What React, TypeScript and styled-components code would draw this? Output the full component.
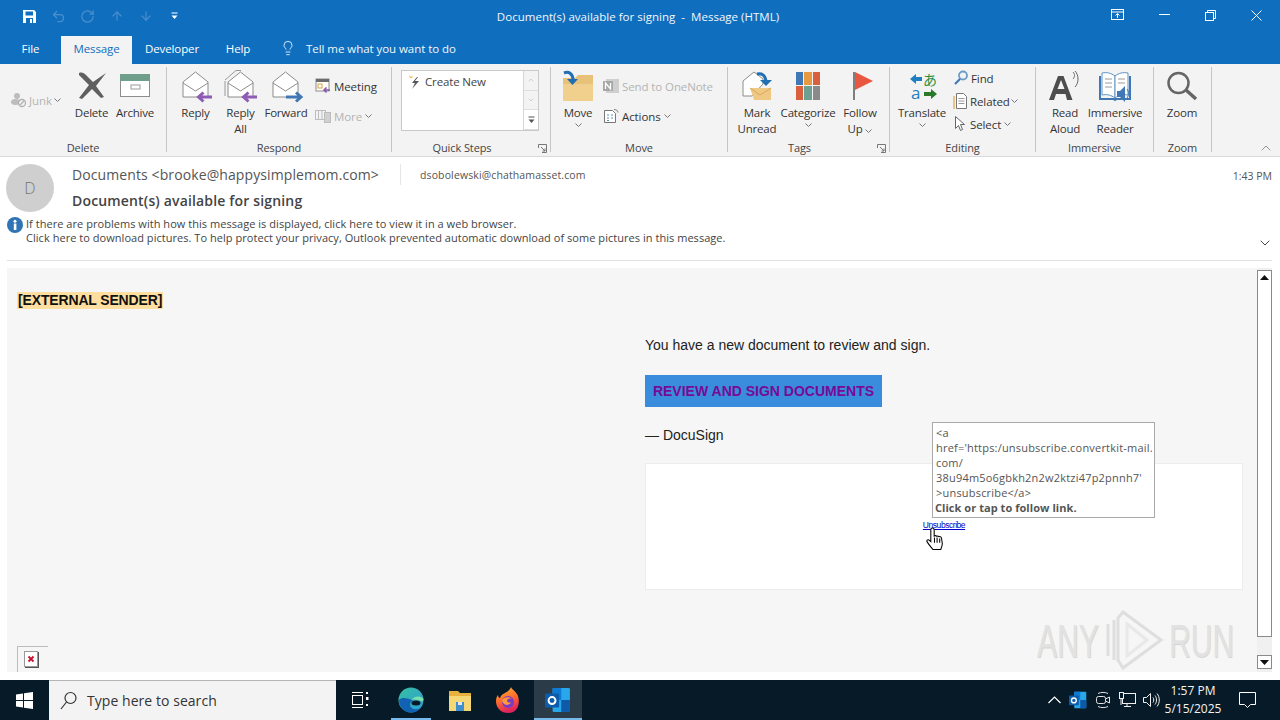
import React, { ReactNode } from 'react';
import styled, { createGlobalStyle } from 'styled-components';
import { ArrowDown, ArrowUp, ChevronDown, ChevronUp, Lightbulb, RotateCw, Undo2 } from 'lucide-react';

const UI_FONT = `'Open Sans', 'Noto Sans', sans-serif`;
const MAIL_FONT = `'Liberation Sans', Arial, sans-serif`;
const BLUE = '#106ebe';

const GlobalStyle = createGlobalStyle`
  html, body {
    margin: 0;
    padding: 0;
    width: 1280px;
    height: 720px;
    overflow: hidden;
    background: #fff;
    font-family: ${UI_FONT};
  }
  * { box-sizing: border-box; }
`;

const Page = styled.div`
  width: 1280px;
  height: 720px;
  display: flex;
  flex-direction: column;
`;

/* title bar */
const TitleBar = styled.div`
  height: 36px;
  background: ${BLUE};
  display: grid;
  grid-template-columns: 1fr 300px 1fr;
  align-items: start;
  color: #fff;
`;

const Qat = styled.div`
  display: flex;
  padding-left: 15px;
  align-items: center;
`;

const QatButton = styled.div<{ $off?: boolean }>`
  width: 29px;
  height: 32px;
  display: flex;
  align-items: center;
  justify-content: center;
  color: ${({ $off }) => ($off ? '#4b8fcd' : '#fff')};
`;

const WindowTitle = styled.div`
  font-size: 11.5px;
  line-height: 34px;
  letter-spacing: 0.02px;
  text-align: center;
  white-space: pre;
  color: #f2f7fc;
  margin-left: -4px;
`;

const WindowControls = styled.div`
  display: flex;
  justify-content: flex-end;
  padding-right: 1px;
`;

const WindowButton = styled.div`
  width: 46px;
  height: 30px;
  display: flex;
  align-items: center;
  justify-content: center;
`;

/* tabs */
const TabRow = styled.div`
  height: 28px;
  background: ${BLUE};
  display: flex;
  align-items: stretch;
`;

const Tab = styled.div<{ $active?: boolean; $w: number }>`
  width: ${({ $w }) => $w}px;
  display: flex;
  align-items: center;
  justify-content: center;
  padding-bottom: 4px;
  font-size: 11.5px;
  letter-spacing: -0.1px;
  color: ${({ $active }) => ($active ? BLUE : '#fff')};
  background: ${({ $active }) => ($active ? '#f3f3f3' : 'transparent')};
`;

const TellMe = styled.div`
  display: flex;
  align-items: center;
  gap: 10px;
  margin-left: 16px;
  padding-bottom: 4px;
  font-size: 11.5px;
  letter-spacing: -0.05px;
  color: #f2f7fc;
`;

/* ribbon */
const Ribbon = styled.div`
  height: 93px;
  background: #f3f3f3;
  border-bottom: 1px solid #d9d9d9;
  display: flex;
  padding-top: 3px;
  position: relative;
`;

const Group = styled.div<{ $w: number }>`
  width: ${({ $w }) => $w}px;
  display: flex;
  flex-direction: column;
  position: relative;
`;

const GroupBody = styled.div<{ $pad: number }>`
  height: 73px;
  padding: 1px 0 0 ${({ $pad }) => $pad}px;
  display: flex;
`;

const GroupLabel = styled.div<{ $launcher?: boolean }>`
  text-align: center;
  font-size: 11px;
  letter-spacing: -0.1px;
  line-height: 16px;
  color: #444;
  margin-top: 2px;
  padding-right: ${({ $launcher }) => ($launcher ? 18 : 0)}px;
`;

const Launcher = styled.div`
  position: absolute;
  right: 3px;
  bottom: 3px;
  width: 9px;
  height: 9px;
  display: flex;
`;

const GroupDivider = styled.div`
  width: 1px;
  height: 85px;
  background: #c6c6c6;
`;

const LargeButton = styled.div<{ $w: number }>`
  width: ${({ $w }) => $w}px;
  display: flex;
  flex-direction: column;
  align-items: center;
`;

const LargeIcon = styled.div<{ $top: number }>`
  height: 37px;
  padding-top: ${({ $top }) => $top}px;
  display: flex;
  align-items: flex-start;
  justify-content: center;
`;

const LargeText = styled.div`
  font-size: 11.5px;
  letter-spacing: -0.2px;
  line-height: 16px;
  color: #333;
  text-align: center;
  white-space: nowrap;
`;

const Caret = styled.span`
  display: block;
  height: 12px;
  line-height: 0;
  color: #666;
  text-align: center;
`;

const SmallColumn = styled.div<{ $top: number; $gap: number; $left: number; $w?: number }>`
  display: flex;
  flex-direction: column;
  width: ${({ $w }) => ($w ? `${$w}px` : 'auto')};
  padding: ${({ $top }) => $top}px 0 0 ${({ $left }) => $left}px;
  gap: ${({ $gap }) => $gap}px;
`;

const SmallButton = styled.div<{ $off?: boolean; $h?: number; $iconGap?: number }>`
  height: ${({ $h }) => $h ?? 22}px;
  display: flex;
  align-items: center;
  gap: ${({ $iconGap }) => $iconGap ?? 3}px;
  font-size: 11.5px;
  letter-spacing: -0.1px;
  color: ${({ $off }) => ($off ? '#b4b4b4' : '#333')};
  white-space: nowrap;
`;

const QuickBox = styled.div`
  margin: 2px 0 0 9px;
  width: 138px;
  height: 61px;
  border: 1px solid #c9c9c9;
  background: #fff;
  display: flex;
`;

const QuickList = styled.div`
  flex: 1;
  display: flex;
  align-items: flex-start;
  gap: 4px;
  padding: 3px 0 0 5px;
  font-size: 11.5px;
  letter-spacing: -0.15px;
  color: #444;
`;

const QuickScroll = styled.div`
  width: 15px;
  border-left: 1px solid #d6d6d6;
  display: flex;
  flex-direction: column;
`;

const QuickArrow = styled.div<{ $on?: boolean }>`
  flex: 1;
  display: flex;
  align-items: center;
  justify-content: center;
  background: ${({ $on }) => ($on ? '#fff' : '#f3f3f3')};
  border-bottom: 1px solid #dedede;
  color: ${({ $on }) => ($on ? '#555' : '#bbb')};
`;

const CollapseButton = styled.div`
  position: absolute;
  right: 6px;
  bottom: 0;
  color: #666;
  line-height: 0;
`;

/* mail header */
const MailHeader = styled.div`
  height: 104px;
  display: flex;
  flex-direction: column;
  padding: 7px 8px 0 6px;
  background: #fff;
`;

const HeaderTop = styled.div`
  display: flex;
  height: 52px;
`;

const Avatar = styled.div`
  width: 48px;
  height: 48px;
  border-radius: 50%;
  background: #cfcfcf;
  color: #777;
  display: flex;
  align-items: center;
  justify-content: center;
  font-size: 16px;
  font-weight: 300;
`;

const HeaderMeta = styled.div`
  flex: 1;
  padding-left: 18px;
`;

const SenderRow = styled.div`
  display: flex;
  align-items: center;
  height: 21px;
`;

const Sender = styled.div`
  width: 328px;
  font-size: 14px;
  letter-spacing: 0.1px;
  color: #555;
  white-space: nowrap;
`;

const SenderDivider = styled.div`
  width: 1px;
  height: 21px;
  background: #e6e6e6;
`;

const Recipient = styled.div`
  flex: 1;
  padding: 1px 0 0 19px;
  font-size: 10.5px;
  letter-spacing: 0.125px;
  color: #555;
`;

const Time = styled.div`
  font-size: 10.5px;
  padding-top: 2px;
  color: #555;
`;

const Subject = styled.div`
  margin-top: 6px;
  line-height: 20px;
  font-size: 14px;
  font-weight: 600;
  letter-spacing: 0.16px;
  color: #444;
`;

const InfoRow = styled.div`
  display: flex;
  align-items: flex-start;
  padding: 1px 0 0 1px;
  gap: 3px;
`;

const InfoLines = styled.div`
  flex: 1;
  font-size: 11px;
  letter-spacing: 0.04px;
  line-height: 14px;
  color: #444;
  white-space: nowrap;
`;

const InfoChevron = styled.div`
  align-self: flex-end;
  color: #444;
  line-height: 0;
  margin: 0 -1px -6px 0;
`;

const HeaderRule = styled.div`
  margin: auto 0 0 1px;
  height: 1px;
  background: #e2e2e2;
`;

/* message */
const BodyRow = styled.div`
  height: 404px;
  margin-top: 7px;
  padding: 0 8px 0 7px;
  display: flex;
  background: #fff;
`;

const Content = styled.div`
  width: 1250px;
  background: #f6f6f6;
  padding: 24px 0 0 10px;
  position: relative;
  display: flex;
  flex-direction: column;
  overflow: hidden;
  font-family: ${MAIL_FONT};
`;

const ExternalTag = styled.div`
  align-self: flex-start;
  height: 17px;
  padding: 0 1px;
  line-height: 17px;
  font-size: 14px;
  letter-spacing: -0.15px;
  font-weight: 700;
  background: #fedf9f;
  color: #111;
`;

const MessageColumn = styled.div`
  margin: 26px 0 0 628px;
  width: 598px;
`;

const Line = styled.div`
  height: 20px;
  line-height: 20px;
  font-size: 14px;
  color: #222;
`;

const SignButton = styled.div`
  margin: 20px 0 18px;
  width: 237px;
  height: 32px;
  line-height: 32px;
  text-align: center;
  background: #3a8ddd;
  color: #780a96;
  font-size: 14px;
  font-weight: 700;
`;

const UnsubscribeCard = styled.div`
  margin-top: 18px;
  height: 127px;
  background: #fff;
  border: 1px solid #ececec;
  display: flex;
  justify-content: center;
  padding-top: 55px;
`;

const UnsubscribeLink = styled.a`
  height: 12px;
  font-size: 8.5px;
  letter-spacing: -0.45px;
  line-height: 12px;
  color: #0000cc;
  text-decoration: underline;
`;

const BrokenImage = styled.div`
  margin-top: auto;
  align-self: flex-start;
  width: 31px;
  height: 26px;
  padding-right: 3px;
  border-top: 1px solid #bdbdbd;
  border-left: 1px solid #bdbdbd;
  display: flex;
  align-items: center;
  justify-content: center;
`;

const LinkTooltip = styled.div`
  position: absolute;
  left: 925px;
  top: 154px;
  width: 223px;
  height: 96px;
  padding: 2px 0 0 3px;
  background: #fff;
  border: 1px solid #a9a9a9;
  font-family: ${UI_FONT};
  font-size: 11px;
  letter-spacing: 0.2px;
  line-height: 15px;
  color: #555;
  white-space: nowrap;
`;

const TooltipStrong = styled.div`
  font-weight: 700;
  letter-spacing: 0.05px;
  margin-left: -1px;
`;

const HandCursor = styled.div`
  position: absolute;
  left: 918px;
  top: 259px;
  line-height: 0;
`;

const Watermark = styled.div`
  position: absolute;
  left: 1030px;
  top: 342px;
  width: 196px;
  height: 62px;
  display: flex;
  align-items: center;
  justify-content: space-between;
  font-family: ${MAIL_FONT};
  color: #e2e2e2;
  pointer-events: none;
`;

const WatermarkWord = styled.span<{ $w: number }>`
  display: block;
  width: ${({ $w }) => $w}px;
  font-size: 47px;
  line-height: 62px;
  transform: scaleX(0.64);
  transform-origin: left center;
  white-space: nowrap;
  text-shadow: 1px 1px 1px #d2d2d2;
`;

const ScrollBar = styled.div`
  width: 15px;
  padding-top: 2px;
  display: flex;
  flex-direction: column;
  background: #f0f0f0;
`;

const ScrollButton = styled.div`
  height: 14px;
  background: #fff;
  border: 1px solid #8a8a8a;
  display: flex;
  align-items: center;
  justify-content: center;
`;

const ScrollThumb = styled.div`
  height: 354px;
  margin-top: -1px;
  background: #fff;
  border: 1px solid #8a8a8a;
  border-top: none;
`;

const ScrollSpacer = styled.div`
  flex: 1;
`;

const ScrollFoot = styled.div`
  height: 3px;
`;

/* taskbar */
const Taskbar = styled.div`
  height: 40px;
  margin-top: 8px;
  background: #071a27;
  display: flex;
  align-items: stretch;
  color: #fff;
`;

const StartButton = styled.div`
  width: 49px;
  display: flex;
  align-items: center;
  justify-content: center;
`;

const SearchBox = styled.div`
  width: 287px;
  background: #f3f3f3;
  border-top: 1px solid #b5b5b5;
  display: flex;
  align-items: center;
  gap: 10px;
  padding-left: 11px;
  font-size: 14px;
  letter-spacing: 0.05px;
  color: #333;
`;

const TaskButton = styled.div<{ $w: number; $active?: boolean; $inset?: number }>`
  width: ${({ $w }) => $w}px;
  display: flex;
  align-items: center;
  justify-content: center;
  background: ${({ $active }) => ($active ? '#2b3c48' : 'transparent')};
  position: relative;
  &::after {
    content: '';
    display: ${({ $inset }) => ($inset === undefined ? 'none' : 'block')};
    position: absolute;
    left: ${({ $inset }) => $inset ?? 0}px;
    right: ${({ $inset }) => $inset ?? 0}px;
    bottom: 0;
    height: 2px;
    background: #76b9ed;
  }
`;

const Tray = styled.div`
  margin-left: auto;
  padding-right: 9px;
  display: flex;
  align-items: center;
`;

const TrayIcon = styled.div<{ $w: number }>`
  width: ${({ $w }) => $w}px;
  height: 40px;
  display: flex;
  align-items: center;
  justify-content: center;
`;

const Clock = styled.div`
  width: 60px;
  text-align: center;
  font-size: 12px;
  line-height: 18px;
  white-space: nowrap;
  color: #f4f4f4;
`;

const Notify = styled.div`
  width: 48px;
  display: flex;
  align-items: center;
  justify-content: center;
`;

/* drawings */
const SaveIcon = () => (
  <svg width="15" height="15" viewBox="0 0 15 15">
    <path d="M1 1h11l2 2v11H1z" fill="#fff" />
    <rect x="3.5" y="2.5" width="7.5" height="4" fill={BLUE} />
    <rect x="4" y="9" width="7" height="5" fill={BLUE} />
    <rect x="8" y="10" width="2" height="4" fill="#fff" />
  </svg>
);

const CaretDown = ({ color = '#fff' }: { color?: string }) => (
  <svg width="7" height="8" viewBox="0 0 7 8">
    <rect x="0.5" y="0.5" width="6" height="1" fill={color} />
    <path d="M0.5 3.5h6l-3 3.5z" fill={color} />
  </svg>
);

const TinyCaret = () => (
  <svg width="7" height="4" viewBox="0 0 7 4" fill="none" stroke="#777">
    <path d="M0.5 0.5l3 3 3-3" />
  </svg>
);

const Envelope = ({ arrow, back, double }: { arrow: string; back?: boolean; double?: boolean }) => (
  <svg width="36" height="36" viewBox="0 0 36 36" fill="none">
    {double && <path d="M2 12L13 2.500h5M2 13v15" stroke="#999" />}
    <path d="M5 14L17.500 4 30 14v15H5z" fill="#fff" stroke="#8c8c8c" />
    <path d="M5 15l12.500 8L30 15" stroke="#8c8c8c" />
    {back ? (
      <path d="M34 29H21M25.500 24.500L20.500 29l5 4.500" stroke={arrow} strokeWidth="3" />
    ) : (
      <path d="M18 29h14M28 24.500l5 4.500-5 4.500" stroke={arrow} strokeWidth="3" />
    )}
  </svg>
);

const DeleteIcon = () => (
  <svg width="32" height="30" viewBox="0 0 32 30">
    <path d="M3 2c3-1 5 0 7 2l7 7 13-9-10 13 8 11-3 1-9-9-10 10-3-1 10-13L3 4z" fill="#5f5f5f" />
  </svg>
);

const ArchiveIcon = () => (
  <svg width="32" height="28" viewBox="0 0 32 28">
    <rect x="1.5" y="6" width="29" height="18.500" fill="#fff" stroke="#8d8d8d" />
    <rect x="1" y="2" width="30" height="7" fill="#6f9f8b" />
    <rect x="12" y="13" width="9" height="4" fill="none" stroke="#9a9a9a" />
  </svg>
);

const JunkIcon = () => (
  <svg width="16" height="16" viewBox="0 0 16 16">
    <circle cx="6" cy="4" r="3" fill="#bdbdbd" />
    <ellipse cx="4.5" cy="10" rx="4.5" ry="3" fill="#bdbdbd" />
    <circle cx="11" cy="11" r="3.5" fill="#f3f3f3" stroke="#b0b0b0" strokeWidth="1.3" />
    <path d="M9 13l4-4" stroke="#b0b0b0" strokeWidth="1.2" />
  </svg>
);

const MeetingIcon = () => (
  <svg width="16" height="16" viewBox="0 0 16 16" fill="none">
    <rect x="1" y="1" width="13" height="12" fill="#fff" stroke="#8c8c8c" />
    <rect x="1" y="1" width="13" height="3" fill="#6b6b6b" />
    <rect x="3" y="6" width="4" height="4" stroke="#d9a441" />
    <path d="M15 12H9M11.5 9.5L9 12l2.5 2.5" stroke="#8a5aae" strokeWidth="1.6" />
  </svg>
);

const MoreIcon = () => (
  <svg width="16" height="16" viewBox="0 0 16 16" fill="none" stroke="#bdbdbd">
    <rect x="0.5" y="2.5" width="10" height="9" />
    <path d="M3.5 3v8M7 3v8" />
    <rect x="9.5" y="4.5" width="6" height="10" fill="#d0d0d0" />
  </svg>
);

const QuickBolt = () => (
  <svg width="14" height="16" viewBox="0 0 14 16">
    <path d="M2 1l2 2 2-1-1 2-2 0z" fill="#e8b84a" />
    <path d="M10 3L5 9h3l-3 6 7-8H8l3-4z" fill="#555" />
  </svg>
);

const MoveIcon = () => (
  <svg width="32" height="32" viewBox="0 0 32 32">
    <path d="M1 8h12l3-3h15v26H1z" fill="#e9c27a" />
    <path d="M1 14h30v17H1z" fill="#f1cf8c" />
    <path d="M2 3c5-2 9 1 9 7" fill="none" stroke="#1f6fb5" strokeWidth="3" />
    <path d="M5 9h11l-5.500 6z" fill="#1f6fb5" />
  </svg>
);

const OneNoteIcon = () => (
  <svg width="16" height="16" viewBox="0 0 16 16">
    <rect x="3" y="1" width="13" height="14" fill="#cfcfcf" />
    <rect x="0" y="3" width="10" height="10" fill="#a7a7a7" />
    <path d="M2.500 11V5l5 6V5" fill="none" stroke="#fff" strokeWidth="1.300" />
  </svg>
);

const ActionsIcon = () => (
  <svg width="16" height="16" viewBox="0 0 16 16" fill="none" stroke="#777">
    <path d="M1.500 2.500h8l3 3v9h-11z" fill="#fff" />
    <path d="M4 7h2M8 7h2M4 10h2M8 10h2M4 12.500h2" stroke="#5d8fb5" />
    <path d="M11 1.500c2 0 4 1 4 3" />
  </svg>
);

const MarkUnreadIcon = () => (
  <svg width="34" height="34" viewBox="0 0 34 34" fill="none">
    <path d="M3 13L14 4l9 7v5L12 28H3z" fill="#fff" stroke="#8c8c8c" />
    <path d="M10 20h21v12H14z" fill="#efc983" />
    <path d="M10 20l10 7 11-7" stroke="#d8a95b" />
    <path d="M17 6c5-1 8 1 9 7" stroke="#1f6fb5" strokeWidth="3" />
    <path d="M20 12h12l-6 6z" fill="#1f6fb5" />
  </svg>
);

const CategorizeIcon = () => (
  <svg width="26" height="32" viewBox="0 0 26 32">
    <rect x="1" y="4" width="7" height="13" fill="#3f78b4" />
    <rect x="9" y="4" width="8" height="13" fill="#e89a42" />
    <rect x="18" y="4" width="7" height="13" fill="#d9603f" />
    <rect x="1" y="18" width="7" height="14" fill="#d9603f" />
    <rect x="9" y="18" width="8" height="14" fill="#6d9f92" />
    <rect x="18" y="18" width="7" height="14" fill="#8a8a8a" />
  </svg>
);

const FlagIcon = () => (
  <svg width="28" height="33" viewBox="0 0 28 33">
    <rect x="7" y="4" width="2" height="28" fill="#7f7f7f" />
    <path d="M9 4l18 9L9 22z" fill="#e8573f" />
  </svg>
);

const TranslateIcon = () => (
  <svg width="32" height="37" viewBox="0 0 32 37" fontFamily="'Noto Sans CJK JP', sans-serif">
    <path d="M16 9h-6V6l-6 5 6 5v-3h6z" fill="#1f7fc0" />
    <text x="17" y="17" fontSize="14" fill="#2f8f3a">あ</text>
    <text x="5" y="31" fontSize="17" fill="#1f7fc0" fontFamily="'Open Sans', sans-serif">a</text>
    <path d="M18 24h7v-3l6 5-6 5v-3h-7z" fill="#2b7a2b" />
  </svg>
);

const FindIcon = () => (
  <svg width="16" height="16" viewBox="0 0 16 16" fill="none">
    <circle cx="10" cy="5.500" r="4" stroke="#6a9dc8" strokeWidth="1.800" />
    <path d="M7 9l-5 5" stroke="#3f78b4" strokeWidth="2.200" />
  </svg>
);

const RelatedIcon = () => (
  <svg width="16" height="18" viewBox="0 0 16 18" fill="none" stroke="#777">
    <path d="M3.500 1.500h7l3 3v12h-10z" fill="#fff" />
    <path d="M5.500 6.500h6M5.500 9h6M5.500 11.500h6" stroke="#999" />
    <path d="M1 4v13" stroke="#e3b765" strokeWidth="1.500" />
  </svg>
);

const SelectIcon = () => (
  <svg width="14" height="18" viewBox="0 0 14 18" fill="#fff" stroke="#666">
    <path d="M2.500 1.500v12l3-3 2 5 2-1-2-5h4z" />
  </svg>
);

const ReadAloudIcon = () => (
  <svg width="34" height="34" viewBox="0 0 34 34">
    <path d="M10 5h5.500l9 24h-5.500l-1.500-6H8l-2 6H1zM9.500 18h7L13 9z" fill="#4d4d4d" fillRule="evenodd" />
    <path d="M25 1c2 2 2 5 0 7M27 0c4 4 4 12 0 16" fill="none" stroke="#666" />
  </svg>
);

const ImmersiveIcon = () => (
  <svg width="34" height="32" viewBox="0 0 34 32" fill="none">
    <path d="M1 6v24h14c1 0 1 1 2 1s1-1 2-1h14V6h-2v22H3V6z" fill="#3f78b4" />
    <path d="M4 3c5-1 9 0 13 3v22c-4-3-8-4-13-3z" fill="#fff" stroke="#5e93c2" />
    <path d="M30 3c-5-1-9 0-13 3v22c4-3 8-4 13-3z" fill="#fff" stroke="#5e93c2" />
    <path d="M7 9h7M7 13h7M7 17h7M20 9h7M20 13h7" stroke="#9a9a9a" />
    <path d="M19 21h3l5-5v16l-5-5h-3z" fill="#3f78b4" />
    <path d="M29 19c2 2 2 7 0 9" stroke="#3f78b4" />
  </svg>
);

const ZoomIcon = () => (
  <svg width="32" height="30" viewBox="0 0 32 30" fill="none">
    <circle cx="12.500" cy="12" r="10" stroke="#666" strokeWidth="2.500" />
    <path d="M20 19l10 9" stroke="#666" strokeWidth="3.500" />
  </svg>
);

const LauncherIcon = () => (
  <svg width="9" height="9" viewBox="0 0 9 9" fill="none" stroke="#777">
    <path d="M0.500 4V0.500H8.500V8.500H4" />
    <path d="M3 3l4 4M7 4.500V7H4.500" />
  </svg>
);

const RestoreRibbonIcon = () => (
  <svg width="14" height="12" viewBox="0 0 14 12" fill="none" stroke="#fff">
    <rect x="0.500" y="0.500" width="12" height="10" />
    <path d="M0.500 3h12" />
    <path d="M6.500 9V5M4.500 6.500l2-2 2 2" />
  </svg>
);

const MinimizeIcon = () => (
  <svg width="11" height="2" viewBox="0 0 11 2">
    <rect width="11" height="1" fill="#fff" />
  </svg>
);

const MaximizeIcon = () => (
  <svg width="11" height="11" viewBox="0 0 11 11" fill="none" stroke="#fff">
    <rect x="0.500" y="2.500" width="8" height="8" />
    <path d="M2.500 2.500v-2h8v8h-2" />
  </svg>
);

const CloseIcon = () => (
  <svg width="11" height="11" viewBox="0 0 11 11" fill="none" stroke="#fff">
    <path d="M0.500 0.500l10 10M10.500 0.500l-10 10" />
  </svg>
);

const InfoIcon = () => (
  <svg width="16" height="16" viewBox="0 0 16 16">
    <circle cx="8" cy="8" r="8" fill="#2f74b5" />
    <rect x="6.800" y="6.500" width="2.600" height="6.500" fill="#fff" />
    <circle cx="8" cy="4.200" r="1.500" fill="#fff" />
  </svg>
);

const BrokenImageIcon = () => (
  <svg width="15" height="17" viewBox="0 0 15 17" fill="none">
    <rect x="0.500" y="0.500" width="13" height="15" fill="#fff" stroke="#999" />
    <path d="M1 16.500h14M14.500 1v16" stroke="#555" />
    <path d="M4.500 5.500l5 5M9.500 5.500l-5 5" stroke="#c8102e" strokeWidth="1.800" />
  </svg>
);

const HandIcon = () => (
  <svg width="20" height="23" viewBox="0 0 17 22">
    <path
      d="M6 1c1 0 1.700.7 1.700 1.700v6c.7-.5 1.800-.5 2.300.2.700-.4 1.700-.3 2.200.4.800-.3 2.300 0 2.500 1.200l.8 5.500c0 1.500-.7 3.500-1.500 5.500H6.500C5.500 20 3 17.500.8 14c-.5-1 .5-2.300 2-1.500l1.700 1.500V2.700C4.500 1.700 5.100 1 6 1z"
      fill="#fff"
      stroke="#000"
    />
    <path d="M8 10v5M10.500 10v5M13 11v4" stroke="#000" fill="none" />
  </svg>
);

const WatermarkLogo = () => (
  <svg width="62" height="62" viewBox="0 0 62 62" fill="none" stroke="#dedede" strokeWidth="3">
    <path d="M5 14v32M11 10v40" />
    <path d="M20 2l38 28-38 28-5-8V8z" />
    <path d="M24 14l20 16-20 16z" stroke="#e8e8e8" />
  </svg>
);

const WindowsLogo = () => (
  <svg width="17" height="17" viewBox="0 0 17 17" fill="#fff">
    <path d="M0 2.400L7 1.400v6.600H0zM8 1.300L17 0v8H8zM0 9h7v6.600l-7-1zM8 9h9v8l-9-1.300z" />
  </svg>
);

const SearchIcon = () => (
  <svg width="17" height="19" viewBox="0 0 17 19" fill="none" stroke="#333" strokeWidth="1.200">
    <circle cx="10.500" cy="7" r="5.500" />
    <path d="M6.500 11l-5.500 7" />
  </svg>
);

const TaskViewIcon = () => (
  <svg width="18" height="18" viewBox="0 0 18 18" fill="none" stroke="#fff">
    <path d="M1 1.500h11M1 16.500h11" />
    <rect x="1.500" y="4.500" width="10" height="9" />
    <rect x="15" y="1" width="2" height="2" fill="#fff" stroke="none" />
    <rect x="15" y="6" width="2.500" height="3" fill="#fff" stroke="none" />
    <rect x="15" y="13" width="2" height="2" fill="#fff" stroke="none" />
  </svg>
);

const EdgeIcon = () => (
  <svg width="26" height="26" viewBox="0 0 26 26">
    <defs>
      <linearGradient id="edgeA" x1="0" y1="0" x2="1" y2="1">
        <stop offset="0" stopColor="#35c1a0" />
        <stop offset="1" stopColor="#2e9bd8" />
      </linearGradient>
    </defs>
    <circle cx="13" cy="13" r="12.500" fill="url(#edgeA)" />
    <path d="M1 13c0 7 5 12.500 12 12.500 4 0 7-1.500 9-4-5 2-10 0-10-4 0-2 1-3 3-4-5-2-11-4-14-.5z" fill="#1262b3" />
    <path d="M13 13c3-1 7 0 12 1.500 0-1 .5-2 .5-2.500-2-3-8-4-12.500 1z" fill="#7de0a8" />
    <ellipse cx="18" cy="16" rx="4.500" ry="2.500" fill="#071a27" />
  </svg>
);

const FolderIcon = () => (
  <svg width="22" height="22" viewBox="0 0 22 22">
    <path d="M0 2h9l2 2h11v18H0z" fill="#e7b13c" />
    <path d="M0 7h22v15H0z" fill="#f6d775" />
    <path d="M7 13h8v9H7z" fill="#3f8fd0" />
    <path d="M9 13h4v3H9z" fill="#e8e8e8" />
  </svg>
);

const FirefoxIcon = () => (
  <svg width="24" height="26" viewBox="0 0 24 26">
    <defs>
      <linearGradient id="foxA" x1="0" y1="0" x2="0.300" y2="1">
        <stop offset="0" stopColor="#ffbd2e" />
        <stop offset="0.600" stopColor="#ff6330" />
        <stop offset="1" stopColor="#e0245e" />
      </linearGradient>
    </defs>
    <path d="M15 0c1 3 5 4 7 9 2 6 1 17-10 17C4 26 0 20 0 14c0-3 1-5 2-6 0 2 1 3 2 3 1-3 3-4 5-5 2-1 5-3 6-6z" fill="url(#foxA)" />
    <circle cx="12" cy="15" r="6" fill="#7c3bc4" />
    <path d="M6 13c2-3 7-4 10-1-3-1-5 0-5 2 0 1 2 2 4 1.500-1 2-4 3-6 2-2-1-3-3-3-4.500z" fill="#ff9a3c" />
  </svg>
);

const OutlookIcon = ({ size = 24 }: { size?: number }) => (
  <svg width={size} height={size} viewBox="0 0 24 24">
    <rect x="7" y="1" width="16" height="22" rx="1" fill="#28a8ea" />
    <rect x="7" y="1" width="8" height="11" fill="#0f78d4" />
    <rect x="15" y="12" width="8" height="11" fill="#0e5aa8" />
    <rect x="0" y="6" width="13" height="13" rx="1" fill="#0b5cab" />
    <circle cx="6.500" cy="12.500" r="3.200" fill="none" stroke="#fff" strokeWidth="1.800" />
  </svg>
);

const TrayChevron = () => (
  <svg width="13" height="8" viewBox="0 0 13 8" fill="none" stroke="#fff" strokeWidth="1.200">
    <path d="M0.500 7L6.500 1l6 6" />
  </svg>
);

const MeetIcon = () => (
  <svg width="16" height="18" viewBox="0 0 16 18" fill="none" stroke="#e4e4e4">
    <path d="M3 2.500c3-1.500 7-1.500 10 0M3 15.500c3 1.500 7 1.500 10 0" />
    <rect x="1.500" y="5.500" width="9" height="7" rx="2" />
    <path d="M10.500 8l4-2v6l-4-2" />
  </svg>
);

const NetworkIcon = () => (
  <svg width="17" height="16" viewBox="0 0 17 16" fill="none" stroke="#f0f0f0">
    <rect x="3.500" y="1.500" width="13" height="10" />
    <path d="M8 11.500v3M5 14.500h7" />
    <rect x="0.500" y="0.500" width="4" height="6" fill="#071a27" />
    <path d="M2 7v6" />
  </svg>
);

const VolumeIcon = () => (
  <svg width="17" height="16" viewBox="0 0 17 16" fill="none" stroke="#f0f0f0">
    <path d="M0.500 5.500h3l4-4v13l-4-4h-3z" />
    <path d="M10 5.500c1 1.500 1 3.500 0 5M12 3.500c2 2.500 2 6.500 0 9M14 1.500c3 3.500 3 9.500 0 13" />
  </svg>
);

const NotifyIcon = () => (
  <svg width="17" height="16" viewBox="0 0 17 16" fill="none" stroke="#fff">
    <path d="M0.500 0.500h16v12h-5l-3 3-3-3h-5z" />
  </svg>
);

const CaretUpSmall = () => (
  <svg width="9" height="5" viewBox="0 0 9 5">
    <path d="M0 5l4.500-5 4.500 5z" fill="#111" />
  </svg>
);

const CaretDownSmall = () => (
  <svg width="9" height="5" viewBox="0 0 9 5">
    <path d="M0 0l4.500 5 4.500-5z" fill="#111" />
  </svg>
);

const Large = ({
  w,
  top = 0,
  icon,
  children,
  caret,
}: {
  w: number;
  top?: number;
  icon: ReactNode;
  children: ReactNode;
  caret?: boolean;
}) => (
  <LargeButton $w={w}>
    <LargeIcon $top={top}>{icon}</LargeIcon>
    <LargeText>{children}</LargeText>
    {caret && (
      <Caret>
        <TinyCaret />
      </Caret>
    )}
  </LargeButton>
);

export default function App(): React.JSX.Element {
  return (
    <Page>
      <GlobalStyle />
      <TitleBar>
        <Qat>
          <QatButton><SaveIcon /></QatButton>
          <QatButton $off><Undo2 size={15} /></QatButton>
          <QatButton $off><RotateCw size={15} /></QatButton>
          <QatButton $off><ArrowUp size={14} /></QatButton>
          <QatButton $off><ArrowDown size={14} /></QatButton>
          <QatButton><CaretDown /></QatButton>
        </Qat>
        <WindowTitle>Document(s) available for signing  -  Message (HTML)</WindowTitle>
        <WindowControls>
          <WindowButton><RestoreRibbonIcon /></WindowButton>
          <WindowButton><MinimizeIcon /></WindowButton>
          <WindowButton><MaximizeIcon /></WindowButton>
          <WindowButton><CloseIcon /></WindowButton>
        </WindowControls>
      </TitleBar>

      <TabRow>
        <Tab $w={61}>File</Tab>
        <Tab $w={71} $active>Message</Tab>
        <Tab $w={80}>Developer</Tab>
        <Tab $w={52}>Help</Tab>
        <TellMe>
          <Lightbulb size={16} strokeWidth={1.3} />
          Tell me what you want to do
        </TellMe>
      </TabRow>

      <Ribbon>
        <Group $w={166}>
          <GroupBody $pad={11}>
            <SmallColumn $top={21} $gap={0} $left={0} $w={59}>
              <SmallButton $off $iconGap={2}>
                <JunkIcon />
                Junk
                <TinyCaret />
              </SmallButton>
            </SmallColumn>
            <Large w={43} top={3} icon={<DeleteIcon />}>Delete</Large>
            <Large w={44} top={4} icon={<ArchiveIcon />}>Archive</Large>
          </GroupBody>
          <GroupLabel>Delete</GroupLabel>
        </Group>
        <GroupDivider />

        <Group $w={224}>
          <GroupBody $pad={6}>
            <Large w={45} icon={<Envelope arrow="#8e5bb5" back />}>Reply</Large>
            <Large w={45} icon={<Envelope arrow="#8e5bb5" back double />}>Reply<br />All</Large>
            <Large w={46} icon={<Envelope arrow="#3f78b4" />}>Forward</Large>
            <SmallColumn $top={7} $gap={8} $left={6}>
              <SmallButton><MeetingIcon />Meeting</SmallButton>
              <SmallButton $off><MoreIcon />More<TinyCaret /></SmallButton>
            </SmallColumn>
          </GroupBody>
          <GroupLabel>Respond</GroupLabel>
        </Group>
        <GroupDivider />

        <Group $w={158}>
          <GroupBody $pad={0}>
            <QuickBox>
              <QuickList><QuickBolt />Create New</QuickList>
              <QuickScroll>
                <QuickArrow><ChevronUp size={8} /></QuickArrow>
                <QuickArrow><ChevronDown size={8} /></QuickArrow>
                <QuickArrow $on><CaretDown color="#555" /></QuickArrow>
              </QuickScroll>
            </QuickBox>
          </GroupBody>
          <GroupLabel $launcher>Quick Steps</GroupLabel>
          <Launcher><LauncherIcon /></Launcher>
        </Group>
        <GroupDivider />

        <Group $w={176}>
          <GroupBody $pad={5}>
            <Large w={44} top={2} icon={<MoveIcon />} caret>Move</Large>
            <SmallColumn $top={7} $gap={8} $left={3}>
              <SmallButton $off><OneNoteIcon />Send to OneNote</SmallButton>
              <SmallButton><ActionsIcon />Actions<TinyCaret /></SmallButton>
            </SmallColumn>
          </GroupBody>
          <GroupLabel>Move</GroupLabel>
        </Group>
        <GroupDivider />

        <Group $w={161}>
          <GroupBody $pad={4}>
            <Large w={50} icon={<MarkUnreadIcon />}>Mark<br />Unread</Large>
            <Large w={52} icon={<CategorizeIcon />} caret>Categorize</Large>
            <Large w={52} icon={<FlagIcon />}>Follow<br />Up <TinyCaret /></Large>
          </GroupBody>
          <GroupLabel $launcher>Tags</GroupLabel>
          <Launcher><LauncherIcon /></Launcher>
        </Group>
        <GroupDivider />

        <Group $w={145}>
          <GroupBody $pad={6}>
            <Large w={52} icon={<TranslateIcon />} caret>Translate</Large>
            <SmallColumn $top={0} $gap={3} $left={5}>
              <SmallButton $h={20} $iconGap={2}><FindIcon />Find</SmallButton>
              <SmallButton $h={20} $iconGap={1}><RelatedIcon />Related<TinyCaret /></SmallButton>
              <SmallButton $h={20} $iconGap={3}><SelectIcon />Select<TinyCaret /></SmallButton>
            </SmallColumn>
          </GroupBody>
          <GroupLabel>Editing</GroupLabel>
        </Group>
        <GroupDivider />

        <Group $w={117}>
          <GroupBody $pad={4}>
            <Large w={50} icon={<ReadAloudIcon />} top={3}>Read<br />Aloud</Large>
            <Large w={50} icon={<ImmersiveIcon />} top={2}>Immersive<br />Reader</Large>
          </GroupBody>
          <GroupLabel>Immersive</GroupLabel>
        </Group>
        <GroupDivider />

        <Group $w={57}>
          <GroupBody $pad={3}>
            <Large w={50} icon={<ZoomIcon />} top={3}>Zoom</Large>
          </GroupBody>
          <GroupLabel>Zoom</GroupLabel>
        </Group>
        <GroupDivider />

        <CollapseButton><ChevronUp size={16} strokeWidth={1} /></CollapseButton>
      </Ribbon>

      <MailHeader>
        <HeaderTop>
          <Avatar>D</Avatar>
          <HeaderMeta>
            <SenderRow>
              <Sender>Documents &lt;brooke@happysimplemom.com&gt;</Sender>
              <SenderDivider />
              <Recipient>dsobolewski@chathamasset.com</Recipient>
              <Time>1:43 PM</Time>
            </SenderRow>
            <Subject>Document(s) available for signing</Subject>
          </HeaderMeta>
        </HeaderTop>
        <InfoRow>
          <InfoIcon />
          <InfoLines>
            If there are problems with how this message is displayed, click here to view it in a web browser.
            <br />
            Click here to download pictures. To help protect your privacy, Outlook prevented automatic download of some pictures in this message.
          </InfoLines>
          <InfoChevron><ChevronDown size={16} strokeWidth={1.5} /></InfoChevron>
        </InfoRow>
        <HeaderRule />
      </MailHeader>

      <BodyRow>
        <Content>
          <ExternalTag>[EXTERNAL SENDER]</ExternalTag>
          <MessageColumn>
            <Line>You have a new document to review and sign.</Line>
            <SignButton>REVIEW AND SIGN DOCUMENTS</SignButton>
            <Line>— DocuSign</Line>
            <UnsubscribeCard>
              <UnsubscribeLink>Unsubscribe</UnsubscribeLink>
            </UnsubscribeCard>
          </MessageColumn>
          <BrokenImage><BrokenImageIcon /></BrokenImage>
          <LinkTooltip>
            &lt;a
            <br />
            href='https:/unsubscribe.convertkit-mail.
            <br />
            com/
            <br />
            38u94m5o6gbkh2n2w2ktzi47p2pnnh7'
            <br />
            &gt;unsubscribe&lt;/a&gt;
            <TooltipStrong>Click or tap to follow link.</TooltipStrong>
          </LinkTooltip>
          <HandCursor><HandIcon /></HandCursor>
          <Watermark>
            <WatermarkWord $w={62}>ANY</WatermarkWord>
            <WatermarkLogo />
            <WatermarkWord $w={64}>RUN</WatermarkWord>
          </Watermark>
        </Content>
        <ScrollBar>
          <ScrollButton><CaretUpSmall /></ScrollButton>
          <ScrollThumb />
          <ScrollSpacer />
          <ScrollButton><CaretDownSmall /></ScrollButton>
          <ScrollFoot />
        </ScrollBar>
      </BodyRow>

      <Taskbar>
        <StartButton><WindowsLogo /></StartButton>
        <SearchBox><SearchIcon />Type here to search</SearchBox>
        <TaskButton $w={48}><TaskViewIcon /></TaskButton>
        <TaskButton $w={54} $inset={7}><EdgeIcon /></TaskButton>
        <TaskButton $w={44}><FolderIcon /></TaskButton>
        <TaskButton $w={52}><FirefoxIcon /></TaskButton>
        <TaskButton $w={48} $active $inset={0}><OutlookIcon size={26} /></TaskButton>
        <Tray>
          <TrayIcon $w={24}><TrayChevron /></TrayIcon>
          <TrayIcon $w={24}><OutlookIcon size={18} /></TrayIcon>
          <TrayIcon $w={25}><MeetIcon /></TrayIcon>
          <TrayIcon $w={24}><NetworkIcon /></TrayIcon>
          <TrayIcon $w={24}><VolumeIcon /></TrayIcon>
          <Clock>1:57 PM<br />5/15/2025</Clock>
          <Notify><NotifyIcon /></Notify>
        </Tray>
      </Taskbar>
    </Page>
  );
}
